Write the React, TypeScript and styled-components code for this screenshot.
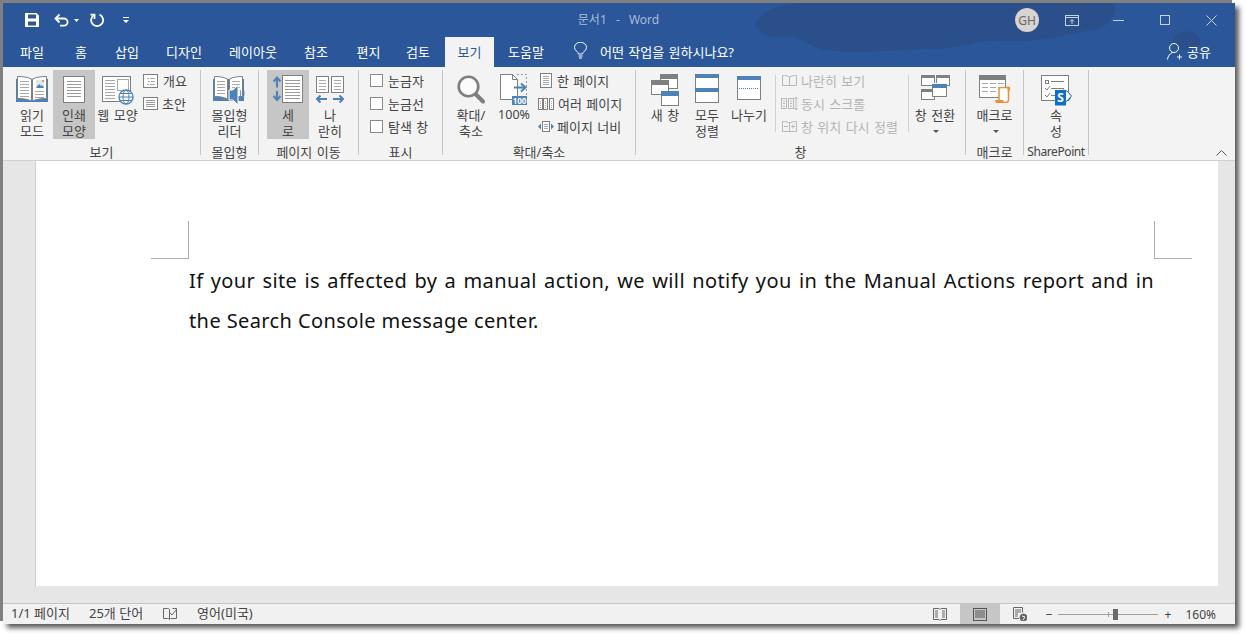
import React from "react";
import styled, { createGlobalStyle } from "styled-components";

const Global = createGlobalStyle`
  html, body { margin: 0; padding: 0; background: #fff; overflow: hidden; }
  body { font-family: "Noto Sans", "Noto Sans CJK KR", sans-serif; }
  svg { display: block; flex: none; }
`;

const Stage = styled.div`
  width: 1246px;
  height: 635px;
  padding: 3px 0 0 3px;
  box-sizing: border-box;
  background: #fff;
`;
const Win = styled.div`
  width: 1232px;
  height: 621px;
  display: flex;
  flex-direction: column;
  background: #e6e6e6;
  box-shadow: -3px -3px 0 #808080, 4px 4px 5px #5a5a5a;
`;
const Header = styled.header`
  position: relative;
  height: 64px;
  flex: none;
  background: #2b579a;
  color: #fff;
  font-size: 13px;
`;
const Clouds = styled.svg`
  position: absolute;
  left: 0;
  top: 0;
`;
const TitleRow = styled.div`
  position: relative;
  height: 34px;
  display: grid;
  grid-template-columns: 1fr auto 1fr;
  align-items: center;
`;
const Qat = styled.div`
  display: flex;
  align-items: center;
  padding-left: 22px;
`;
const Gap = styled.span<{ $w: number }>`
  width: ${(p) => p.$w}px;
  flex: none;
`;
const Title = styled.div`
  color: #a9bcd9;
  font-size: 12px;
  word-spacing: 6px;
  margin-right: 1px;
  padding-bottom: 2px;
`;
const WinControls = styled.div`
  display: flex;
  align-items: center;
  justify-content: flex-end;
  padding-right: 18px;
`;
const Avatar = styled.div`
  width: 24px;
  height: 24px;
  border-radius: 50%;
  background: #d8d4cf;
  color: #666;
  font-size: 12px;
  display: flex;
  align-items: center;
  justify-content: center;
  margin-right: 26px;
`;
const TabRow = styled.nav`
  position: relative;
  height: 30px;
  display: flex;
  align-items: stretch;
  padding-left: 5px;
`;
const Tab = styled.div<{ $w: number; $active?: boolean }>`
  width: ${(p) => p.$w}px;
  box-sizing: border-box;
  padding-bottom: 2px;
  display: flex;
  align-items: center;
  justify-content: center;
  background: ${(p) => (p.$active ? "#f3f3f3" : "transparent")};
  color: ${(p) => (p.$active ? "#2b579a" : "#fff")};
`;
const Tell = styled.div`
  display: flex;
  align-items: center;
  gap: 13px;
  margin-left: 16px;
  word-spacing: 1px;
  padding-bottom: 2px;
`;
const Share = styled.div`
  margin-left: auto;
  padding: 0 24px 2px 0;
  display: flex;
  align-items: center;
  gap: 5px;
`;
const Ribbon = styled.section`
  height: 94px;
  flex: none;
  box-sizing: border-box;
  padding-top: 3px;
  display: flex;
  align-items: flex-start;
  background: #f3f3f3;
  border-bottom: 1px solid #d0d0d0;
  color: #444;
  font-size: 13px;
  word-spacing: 1px;
`;
const Group = styled.div<{ $w: number }>`
  width: ${(p) => p.$w}px;
  height: 85px;
  box-sizing: border-box;
  flex: none;
  border-right: 1px solid #c6c6c6;
  display: flex;
  flex-direction: column;
`;
const GroupBody = styled.div<{ $pad?: number }>`
  height: 74px;
  display: flex;
  align-items: flex-start;
  padding-left: ${(p) => p.$pad ?? 0}px;
`;
const GroupLabel = styled.div<{ $latin?: boolean }>`
  height: 11px;
  line-height: 16px;
  text-align: center;
  white-space: nowrap;
  font-size: ${(p) => (p.$latin ? "12px" : "13px")};
  letter-spacing: ${(p) => (p.$latin ? "-0.4px" : "0")};
`;
const LargeBtn = styled.div<{ $w: number; $on?: boolean; $ml?: number }>`
  width: ${(p) => p.$w}px;
  height: 69px;
  flex: none;
  margin-left: ${(p) => p.$ml ?? 0}px;
  display: flex;
  flex-direction: column;
  align-items: center;
  background: ${(p) => (p.$on ? "#c6c6c6" : "transparent")};
`;
const IconSlot = styled.div<{ $top: number }>`
  height: 37px;
  box-sizing: border-box;
  padding-top: ${(p) => p.$top}px;
`;
const BtnText = styled.div<{ $latin?: boolean }>`
  line-height: 16px;
  text-align: center;
  white-space: nowrap;
  font-size: ${(p) => (p.$latin ? "12.5px" : "13px")};
`;
const Caret = styled.div`
  width: 0;
  height: 0;
  margin: 7px 0 0 2px;
  border-left: 3px solid transparent;
  border-right: 3px solid transparent;
  border-top: 3px solid #555;
`;
const SmallCol = styled.div<{ $ml?: number; $w?: number; $off?: boolean }>`
  display: flex;
  flex-direction: column;
  flex: none;
  margin-top: -1px;
  margin-left: ${(p) => p.$ml ?? 0}px;
  width: ${(p) => (p.$w ? `${p.$w}px` : "auto")};
  color: ${(p) => (p.$off ? "#b4b4b4" : "#444")};
`;
const SmallRow = styled.div<{ $gap?: number }>`
  height: 23px;
  display: flex;
  align-items: center;
  gap: ${(p) => p.$gap ?? 5}px;
  white-space: nowrap;
`;
const SmallIcon = styled.div<{ $w: number }>`
  width: ${(p) => p.$w}px;
  display: flex;
  justify-content: center;
  flex: none;
`;
const Check = styled.div`
  width: 11px;
  height: 11px;
  flex: none;
  background: #fff;
  border: 1px solid #8a8a8a;
`;
const VSep = styled.div<{ $ml: number }>`
  width: 1px;
  height: 57px;
  flex: none;
  margin: 5px 0 0 ${(p) => p.$ml}px;
  background: #d0d0d0;
`;
const Collapse = styled.div`
  margin-left: auto;
  margin-right: 8px;
  margin-top: 80px;
`;
const DocArea = styled.main`
  flex: 1;
  box-sizing: border-box;
  padding: 0 17px 17px 32px;
  display: flex;
  min-height: 0;
  background: #e6e6e6;
`;
const Page = styled.article`
  position: relative;
  flex: 1;
  box-sizing: border-box;
  border-left: 1px solid #cfcfcf;
  background: #fff;
  padding: 100px 64px 0 153px;
`;
const Crop = styled.div<{ $side: "l" | "r" }>`
  position: absolute;
  top: 60px;
  width: 38px;
  height: 38px;
  box-sizing: border-box;
  border-bottom: 1px solid #acacac;
  ${(p) =>
    p.$side === "l"
      ? "left: 115px; border-right: 1px solid #acacac;"
      : "right: 26px; border-left: 1px solid #acacac;"}
`;
const Para = styled.p`
  margin: 0;
  font-family: "Noto Sans", "Noto Sans CJK KR", sans-serif;
  font-size: 20px;
  line-height: 40px;
  letter-spacing: 0.4px;
  color: #111;
  text-align: justify;
`;
const Status = styled.footer`
  height: 21px;
  flex: none;
  box-sizing: border-box;
  border-top: 1px solid #c6c6c6;
  background: #f1f1f1;
  color: #444;
  font-size: 13px;
  display: flex;
  align-items: center;
  padding-left: 8px;
`;
const StatusItem = styled.div`
  margin-right: 19px;
  white-space: nowrap;
  padding-bottom: 3px;
`;
const StatusGlyph = styled.div`
  margin: 0 20px 0 1px;
`;
const ViewBtn = styled.div<{ $on?: boolean; $auto?: boolean }>`
  width: 40px;
  height: 20px;
  display: flex;
  align-items: center;
  justify-content: center;
  margin-left: ${(p) => (p.$auto ? "auto" : "0")};
  background: ${(p) => (p.$on ? "#c6c6c6" : "transparent")};
`;
const ZoomBar = styled.div`
  display: flex;
  align-items: center;
  gap: 5px;
  margin-left: 6px;
  font-size: 12px;
`;
const PlusSign = styled.span`
  margin-left: 2px;
`;
const Slider = styled.div`
  position: relative;
  width: 100px;
  height: 1px;
  background: #a0a0a0;
`;
const Tick = styled.div`
  position: absolute;
  left: 50px;
  top: -2px;
  width: 1px;
  height: 5px;
  background: #a0a0a0;
`;
const Knob = styled.div`
  position: absolute;
  left: 55px;
  top: -5px;
  width: 5px;
  height: 11px;
  background: #6a6a6a;
`;
const Percent = styled.div`
  margin-left: 14px;
  margin-right: 19px;
  font-size: 12px;
`;

const G = "#7f7f7f";
const L = "#a8a8a8";
const B = "#4d82b8";

const Lines = ({ x1, x2, ys, c = L }: { x1: number; x2: number; ys: number[]; c?: string }) => (
  <>
    {ys.map((y) => (
      <line key={y} x1={x1} x2={x2} y1={y + 0.5} y2={y + 0.5} stroke={c} />
    ))}
  </>
);

const SaveIcon = () => (
  <svg width="14" height="14" viewBox="0 0 14 14">
    <path fill="#fff" fillRule="evenodd" d="M0 0h11.5L14 2.5V14H0zM3 1.5v4h8v-4zM3 8.5v4h8v-4z" />
  </svg>
);
const UndoIcon = () => (
  <svg width="15" height="14" viewBox="0 0 15 14" fill="none" stroke="#fff" strokeWidth="1.8">
    <path d="M2 5.5h8a3.6 3.6 0 0 1 0 7.2H6" />
    <path d="M5.5 1.5 1.5 5.5l4 4" />
  </svg>
);
const RedoIcon = () => (
  <svg width="14" height="14" viewBox="0 0 14 14" fill="none" stroke="#fff" strokeWidth="1.8">
    <path d="M9.5 1.6a6 6 0 1 1-5.5.4" />
    <path d="M4.5 6V1.6H.5" />
  </svg>
);
const TinyCaret = ({ c = "#fff" }: { c?: string }) => (
  <svg width="5" height="3" viewBox="0 0 5 3">
    <path d="M0 0h5L2.5 3z" fill={c} />
  </svg>
);
const CustomizeIcon = () => (
  <svg width="6" height="6" viewBox="0 0 6 6">
    <path d="M0 0h6v1H0zM0 3h6L3 6z" fill="#fff" />
  </svg>
);
const DisplayIcon = () => (
  <svg width="14" height="11" viewBox="0 0 14 11" fill="none" stroke="#c6d3e6">
    <rect x=".5" y=".5" width="13" height="10" />
    <path d="M1 2.5h12M7 9V4.5M5 6.5l2-2 2 2" />
  </svg>
);
const MinIcon = () => (
  <svg width="11" height="1" viewBox="0 0 11 1">
    <rect width="11" height="1" fill="#c6d3e6" />
  </svg>
);
const MaxIcon = () => (
  <svg width="10" height="10" viewBox="0 0 10 10" fill="none" stroke="#c6d3e6">
    <rect x=".5" y=".5" width="9" height="9" />
  </svg>
);
const CloseIcon = () => (
  <svg width="11" height="11" viewBox="0 0 11 11" fill="none" stroke="#c6d3e6">
    <path d="M.5.5l10 10M10.5.5l-10 10" />
  </svg>
);
const BulbIcon = () => (
  <svg width="13" height="18" viewBox="0 0 13 18" fill="none" stroke="#fff">
    <path d="M4.5 12c0-2-4-3.400-4-6.500a6 5.300 0 0 1 12 0c0 3.100-4 4.500-4 6.500z" />
    <path d="M4.500 14h4M5 16h3" />
  </svg>
);
const ShareIcon = () => (
  <svg width="15" height="17" viewBox="0 0 15 17" fill="none" stroke="#fff">
    <ellipse cx="7" cy="5" rx="4.500" ry="4.500" />
    <path d="M.5 16.500c.3-3.500 2.500-6 5-7M10 14h5M12.500 11.500v5" />
  </svg>
);

const ReadIcon = () => (
  <svg width="32" height="27" viewBox="0 0 32 27">
    <rect x="0" y="3" width="32" height="23" fill={B} />
    <path d="M1.500.5c5 0 10 .5 14 2.500v22c-4-2-9-2.500-14-2.500z" fill="#fff" stroke={G} />
    <path d="M30.500.5c-5 0-10 .5-14 2.500v22c4-2 9-2.500 14-2.500z" fill="#fff" stroke={G} />
    <Lines x1={4} x2={13} ys={[5, 8, 11, 14, 17, 20]} />
    <Lines x1={19} x2={28} ys={[15, 18, 21]} />
    <rect x="20" y="4" width="8" height="8" fill="#dfe7f1" />
    <path d="M20 12l3-4 2 2 1-1 2 3z" fill={B} />
    <rect x="26" y="4" width="2" height="2" fill="#e8903a" />
  </svg>
);
const PrintIcon = () => (
  <svg width="22" height="27" viewBox="0 0 22 27">
    <rect x=".5" y=".5" width="21" height="26" fill="#fff" stroke={G} />
    <Lines x1={4} x2={18} ys={[5, 8, 11, 14, 17, 20]} c="#999" />
  </svg>
);
const WebIcon = () => (
  <svg width="32" height="29" viewBox="0 0 32 29">
    <rect x=".5" y=".5" width="28" height="25" fill="#fff" stroke={G} />
    <Lines x1={3} x2={13} ys={[4, 7, 10, 13, 16, 19, 22]} />
    <rect x="15.500" y="3.500" width="11" height="11" fill="#fff" stroke={L} />
    <circle cx="24" cy="21" r="7" fill="#fff" stroke={B} strokeWidth="1.300" />
    <ellipse cx="24" cy="21" rx="3" ry="7" fill="none" stroke={B} />
    <path d="M17 21h14M18.500 17.500h11M18.500 24.500h11" stroke={B} />
  </svg>
);
const OutlineIcon = () => (
  <svg width="15" height="14" viewBox="0 0 15 14">
    <rect x=".5" y=".5" width="14" height="13" fill="#fff" stroke={G} />
    <path d="M4 4.500h2M7 4.500h5M5 7.500h2M8 7.500h4M4 10.500h2M7 10.500h5" stroke={L} />
  </svg>
);
const DraftIcon = () => (
  <svg width="15" height="13" viewBox="0 0 15 13">
    <rect x=".5" y=".5" width="14" height="12" fill="#fff" stroke={G} />
    <Lines x1={3} x2={12} ys={[3, 5, 7, 9]} c="#999" />
  </svg>
);
const ImmersiveIcon = () => (
  <svg width="33" height="30" viewBox="0 0 33 30">
    <rect x="0" y="3" width="31" height="22" fill={B} />
    <path d="M1.500.5c5 0 9 .5 13 2.500v20c-4-2-8-2.500-13-2.500z" fill="#fff" stroke={G} />
    <path d="M29.500.5c-5 0-9 .5-13 2.500v20c4-2 8-2.500 13-2.500z" fill="#fff" stroke={G} />
    <Lines x1={4} x2={12} ys={[5, 8, 11, 14, 17]} />
    <Lines x1={19} x2={27} ys={[5, 8, 11]} />
    <path d="M16 14h4l5-5v20l-5-5h-4z" fill={B} stroke="#fff" />
    <path d="M27 14c1 2 1 5 0 7M29.500 12c2 3 2 8 0 11" fill="none" stroke={B} />
  </svg>
);
const VerticalIcon = () => (
  <svg width="30" height="28" viewBox="0 0 30 28">
    <rect x="9.500" y=".5" width="20" height="27" fill="#fff" stroke={G} />
    <Lines x1={12} x2={27} ys={[5, 8, 11, 14, 17, 20, 23]} c="#999" />
    <path d="M4 3.500v9M4 16v9" stroke={B} strokeWidth="2.200" fill="none" />
    <path d="M.5 6.500 4 2.500l3.500 4M.5 21 4 25l3.500-4" stroke={B} strokeWidth="2" fill="none" />
  </svg>
);
const SideIcon = () => (
  <svg width="28" height="28" viewBox="0 0 28 28">
    <rect x=".5" y=".5" width="12" height="16" fill="#fff" stroke={G} />
    <rect x="15.500" y=".5" width="12" height="16" fill="#fff" stroke={G} />
    <Lines x1={3} x2={10} ys={[4, 7, 10, 13]} />
    <Lines x1={18} x2={25} ys={[4, 7, 10, 13]} />
    <path d="M1 23h10M17 23h10M4.500 19.500 1 23l3.500 3.500M23.500 19.500 27 23l-3.500 3.500" stroke={B} strokeWidth="2" fill="none" />
  </svg>
);
const Magnifier = () => (
  <svg width="28" height="29" viewBox="0 0 28 29" fill="none">
    <circle cx="11.500" cy="11.500" r="9.800" stroke={G} strokeWidth="2.600" fill="#fbfbfb" />
    <path d="M19 19.500l7 7" stroke={G} strokeWidth="4" strokeLinecap="round" />
  </svg>
);
const ZoomHundred = () => (
  <svg width="28" height="32" viewBox="0 0 28 32">
    <path d="M.5.500h12l5 5v20H.5z" fill="#fff" stroke={G} />
    <path d="M12.500.500v5h5" fill="none" stroke={G} />
    <path d="M17 .5h9.500v22" fill="none" stroke="#999" strokeDasharray="2 2" />
    <path d="M14 13.500h11M21 9.500l4.500 4-4.500 4" fill="none" stroke={B} strokeWidth="2" />
    <rect x="12" y="22" width="15" height="9" fill={B} />
    <text x="19.500" y="29.500" textAnchor="middle" fontSize="8" fontWeight="700" fill="#fff" fontFamily="Noto Sans">100</text>
  </svg>
);
const OnePage = () => (
  <svg width="12" height="15" viewBox="0 0 12 15">
    <rect x=".5" y=".5" width="11" height="14" fill="#fff" stroke={G} />
    <Lines x1={3} x2={9} ys={[3, 5, 7, 9, 11]} />
  </svg>
);
const MultiPage = () => (
  <svg width="16" height="12" viewBox="0 0 16 12">
    <rect x=".5" y=".5" width="4" height="11" fill="#fff" stroke={G} />
    <rect x="5.500" y=".5" width="4" height="11" fill="#fff" stroke={G} />
    <rect x="11.500" y=".5" width="4" height="11" fill="#fff" stroke={G} />
    <Lines x1={2} x2={3} ys={[3, 5, 7, 9]} />
    <Lines x1={7} x2={8} ys={[3, 5, 7, 9]} />
    <Lines x1={13} x2={14} ys={[3, 5, 7, 9]} />
  </svg>
);
const PageWidth = () => (
  <svg width="16" height="11" viewBox="0 0 16 11">
    <path d="M3 2.500v6L0 5.500zM13 2.500v6l3-3z" fill={B} />
    <rect x="4.500" y=".5" width="7" height="10" fill="#fff" stroke={G} />
    <Lines x1={6} x2={10} ys={[3, 5, 7]} />
  </svg>
);
const Win3 = () => (
  <svg width="28" height="32" viewBox="0 0 28 32">
    <rect x="9.500" y=".5" width="17" height="14" fill="#fff" stroke={G} />
    <rect x="9" y="0" width="18" height="5" fill={G} />
    <rect x=".5" y="6.500" width="17" height="14" fill="#fff" stroke={G} />
    <rect x="0" y="6" width="18" height="5" fill={G} />
    <rect x="10.500" y="17.500" width="17" height="14" fill="#fff" stroke={G} />
    <rect x="10" y="17" width="18" height="5" fill={B} />
  </svg>
);
const ArrangeAll = () => (
  <svg width="24" height="29" viewBox="0 0 24 29">
    <rect x=".5" y=".5" width="23" height="28" fill="#fff" stroke={G} />
    <rect x="0" y="0" width="24" height="4" fill={B} />
    <rect x="0" y="14" width="24" height="4" fill={B} />
  </svg>
);
const SplitIcon = () => (
  <svg width="24" height="24" viewBox="0 0 24 24">
    <rect x=".5" y=".5" width="23" height="23" fill="#fff" stroke={G} />
    <rect x="0" y="0" width="24" height="4" fill={B} />
    <path d="M2 12.500h20" stroke={B} strokeDasharray="1 1" />
  </svg>
);
const SwitchIcon = () => (
  <svg width="29" height="25" viewBox="0 0 29 25">
    <rect x=".5" y=".5" width="13" height="10" fill="#fff" stroke={G} />
    <rect x="0" y="0" width="14" height="3" fill={G} />
    <rect x="15.500" y=".5" width="13" height="10" fill="#fff" stroke={G} />
    <rect x="15" y="0" width="14" height="3" fill={G} />
    <rect x=".5" y="14.500" width="13" height="10" fill="#fff" stroke={G} />
    <rect x="0" y="14" width="14" height="3" fill={G} />
    <rect x="11" y="8" width="15" height="14" fill="#f3f3f3" />
    <rect x="11.500" y="9.500" width="14" height="12" fill="#fff" stroke={G} />
    <rect x="11" y="9" width="15" height="4" fill={B} />
  </svg>
);
const MacroIcon = () => (
  <svg width="31" height="28" viewBox="0 0 31 28">
    <rect x=".5" y=".5" width="26" height="22" fill="#fff" stroke={G} />
    <rect x="0" y="0" width="27" height="5" fill={G} />
    <path d="M3 8.500h6M11 8.500h6M19 8.500h6M3 12.500h6M11 12.500h6M19 12.500h6M3 16.500h6M11 16.500h6" stroke={L} />
    <path d="M20 14c0-1 1-1.500 2-1.500h9c-1 .5-1.500 1-1.500 2v10c0 2-1 3-3 3h-9c1.500-.5 2.500-1.500 2.500-3z" fill="#fff" stroke="#e8903a" strokeWidth="1.500" />
    <path d="M16 25h8.500v3H17z" fill="#e8903a" />
    <path d="M28 12.500h3v3h-2z" fill="#e8903a" />
  </svg>
);
const SharePointIcon = () => (
  <svg width="31" height="31" viewBox="0 0 31 31">
    <rect x=".5" y=".5" width="27" height="25" fill="#fff" stroke={G} />
    <rect x="4.500" y="5.500" width="3" height="3" fill="none" stroke={G} />
    <path d="M10 6.500h13M10 13.500h13M10 20.500h5" stroke={G} />
    <path d="M4 13l2 2 3-4M4 20l2 2 3-4" fill="none" stroke={G} />
    <circle cx="25.500" cy="21.500" r="3.500" fill="#fff" stroke="#0f6fc6" strokeWidth="2" />
    <path d="M22 15l4 1 4.500 5-4.500 5-4 1z" fill="#fff" stroke="#0f6fc6" />
    <rect x="14" y="15" width="11" height="15.500" fill="#0f6fc6" />
    <text x="19.500" y="27" textAnchor="middle" fontSize="12" fontWeight="700" fill="#fff" fontFamily="Noto Sans">S</text>
  </svg>
);
const OFF = "#b8b8b8";
const SideOff = () => (
  <svg width="15" height="11" viewBox="0 0 15 11" fill="none" stroke={OFF}>
    <path d="M.5.500c3 0 5 .5 7 1.500 2-1 4-1.500 7-1.500v10h-14zM7.500 2v8.500" />
  </svg>
);
const ScrollOff = () => (
  <svg width="17" height="15" viewBox="0 0 17 15" fill="none" stroke={OFF}>
    <rect x=".5" y="2.500" width="5" height="10" />
    <rect x="7.500" y="2.500" width="5" height="10" />
    <path d="M2 5h2M2 7.500h2M2 10h2M9 5h2M9 7.500h2M9 10h2M15 1v13M13.500 3 15 1l1.500 2M13.500 12l1.500 2 1.500-2" />
  </svg>
);
const ResetOff = () => (
  <svg width="15" height="11" viewBox="0 0 15 11" fill="none" stroke={OFF}>
    <path d="M.5.500c3 0 5 .5 7 1.500 2-1 4-1.500 7-1.500v10h-14zM7.500 2v8.500M2 5.500h4M9 5.500h4M11 3.500v4" />
  </svg>
);
const Chevron = () => (
  <svg width="11" height="6" viewBox="0 0 11 6" fill="none" stroke="#555">
    <path d="M.5 5.500l5-5 5 5" />
  </svg>
);
const ProofIcon = () => (
  <svg width="14" height="12" viewBox="0 0 14 12" fill="none" stroke="#666">
    <path d="M.5.500h4c1 0 2 .5 2 1v10c0-.5-1-1-2-1h-4zM9.500.500h4v10h-6M7 5l2 2 4-5" />
  </svg>
);
const StatRead = () => (
  <svg width="14" height="13" viewBox="0 0 14 13" fill="none" stroke="#666">
    <path d="M.5.500h5.500l1 1 1-1h5.500v11h-5.500l-1 1-1-1H.5zM2 3h3M2 5h3M2 7h3M2 9h3M9 3h3M9 5h3M9 7h3M9 9h3" />
  </svg>
);
const StatPrint = () => (
  <svg width="14" height="13" viewBox="0 0 14 13" fill="none" stroke="#555">
    <rect x=".5" y=".5" width="13" height="12" />
    <path d="M2 3h10M2 5h10M2 7h10M2 9h10" />
  </svg>
);
const StatWeb = () => (
  <svg width="14" height="14" viewBox="0 0 14 14" fill="none" stroke="#666">
    <path d="M6 11.500H.5V.500h9v5M2 3h6M2 5h6M2 7h3M2 9h3" />
    <circle cx="10.500" cy="10.500" r="3.500" fill="#666" />
    <path d="M9 9l3 1-2 3" stroke="#f1f1f1" />
  </svg>
);

const Big = ({ w, top, on, ml, text, icon, caret, latin }: { w: number; top: number; on?: boolean; ml?: number; text: React.ReactNode; icon: React.ReactNode; caret?: boolean; latin?: boolean }) => (
  <LargeBtn $w={w} $on={on} $ml={ml}>
    <IconSlot $top={top}>{icon}</IconSlot>
    <BtnText $latin={latin}>{text}</BtnText>
    {caret && <Caret />}
  </LargeBtn>
);

export default function App() {
  return (
    <Stage>
      <Global />
      <Win>
        <Header>
          <Clouds width="1232" height="64" viewBox="0 0 1232 64">
            <path
              fill="#2a4f8b"
              d="M752 22C755 8 775 2 800 0H1110C1115 6 1110 20 1095 26C1070 30 1040 40 1000 38C975 36 960 46 930 46C890 48 850 50 830 48C810 46 800 36 790 34C770 36 755 32 752 22ZM1170 37c2-10 22-12 26-2 4 8-6 14-14 12-8 0-14-4-12-10z"
            />
          </Clouds>
          <TitleRow>
            <Qat>
              <SaveIcon />
              <Gap $w={15} />
              <UndoIcon />
              <Gap $w={5} />
              <TinyCaret />
              <Gap $w={11} />
              <RedoIcon />
              <Gap $w={19} />
              <CustomizeIcon />
            </Qat>
            <Title>문서1 - Word</Title>
            <WinControls>
              <Avatar>GH</Avatar>
              <DisplayIcon />
              <Gap $w={34} />
              <MinIcon />
              <Gap $w={36} />
              <MaxIcon />
              <Gap $w={36} />
              <CloseIcon />
            </WinControls>
          </TitleRow>
          <TabRow>
            <Tab $w={48}>파일</Tab>
            <Tab $w={50}>홈</Tab>
            <Tab $w={42}>삽입</Tab>
            <Tab $w={72}>디자인</Tab>
            <Tab $w={66}>레이아웃</Tab>
            <Tab $w={60}>참조</Tab>
            <Tab $w={45}>편지</Tab>
            <Tab $w={54}>검토</Tab>
            <Tab $w={49} $active>보기</Tab>
            <Tab $w={64}>도움말</Tab>
            <Tell>
              <BulbIcon />
              <span>어떤 작업을 원하시나요?</span>
            </Tell>
            <Share>
              <ShareIcon />
              <span>공유</span>
            </Share>
          </TabRow>
        </Header>

        <Ribbon>
          <Group $w={198}>
            <GroupBody $pad={8}>
              <Big w={42} top={6} icon={<ReadIcon />} text={<>읽기<br />모드</>} />
              <Big w={42} top={6} on icon={<PrintIcon />} text={<>인쇄<br />모양</>} />
              <Big w={45} top={6} icon={<WebIcon />} text="웹 모양" />
              <SmallCol $ml={3}>
                <SmallRow><SmallIcon $w={15}><OutlineIcon /></SmallIcon>개요</SmallRow>
                <SmallRow $gap={4}><SmallIcon $w={15}><DraftIcon /></SmallIcon>초안</SmallRow>
              </SmallCol>
            </GroupBody>
            <GroupLabel>보기</GroupLabel>
          </Group>
          <Group $w={58}>
            <GroupBody>
              <Big w={57} top={6} icon={<ImmersiveIcon />} text={<>몰입형<br />리더</>} />
            </GroupBody>
            <GroupLabel>몰입형</GroupLabel>
          </Group>
          <Group $w={100}>
            <GroupBody $pad={8}>
              <Big w={42} top={5} on icon={<VerticalIcon />} text={<>세<br />로</>} />
              <Big w={42} top={6} icon={<SideIcon />} text={<>나<br />란히</>} />
            </GroupBody>
            <GroupLabel>페이지 이동</GroupLabel>
          </Group>
          <Group $w={84}>
            <GroupBody $pad={11}>
              <SmallCol>
                <SmallRow><Check />눈금자</SmallRow>
                <SmallRow><Check />눈금선</SmallRow>
                <SmallRow><Check />탐색 창</SmallRow>
              </SmallCol>
            </GroupBody>
            <GroupLabel>표시</GroupLabel>
          </Group>
          <Group $w={193}>
            <GroupBody>
              <Big w={56} top={5} icon={<Magnifier />} text={<>확대/<br />축소</>} />
              <Big w={30} top={4} latin icon={<ZoomHundred />} text="100%" />
              <SmallCol $ml={9}>
                <SmallRow $gap={3}><SmallIcon $w={16}><OnePage /></SmallIcon>한 페이지</SmallRow>
                <SmallRow $gap={4}><SmallIcon $w={16}><MultiPage /></SmallIcon>여러 페이지</SmallRow>
                <SmallRow $gap={3}><SmallIcon $w={16}><PageWidth /></SmallIcon>페이지 너비</SmallRow>
              </SmallCol>
            </GroupBody>
            <GroupLabel>확대/축소</GroupLabel>
          </Group>
          <Group $w={330}>
            <GroupBody $pad={8}>
              <Big w={42} top={4} icon={<Win3 />} text="새 창" />
              <Big w={42} top={4} icon={<ArrangeAll />} text={<>모두<br />정렬</>} />
              <Big w={42} top={6} icon={<SplitIcon />} text="나누기" />
              <VSep $ml={5} />
              <SmallCol $ml={6} $w={120} $off>
                <SmallRow $gap={4}><SmallIcon $w={15}><SideOff /></SmallIcon>나란히 보기</SmallRow>
                <SmallRow $gap={4}><SmallIcon $w={15}><ScrollOff /></SmallIcon>동시 스크롤</SmallRow>
                <SmallRow $gap={4}><SmallIcon $w={15}><ResetOff /></SmallIcon>창 위치 다시 정렬</SmallRow>
              </SmallCol>
              <VSep $ml={6} />
              <Big w={48} ml={2} top={5} icon={<SwitchIcon />} text="창 전환" caret />
            </GroupBody>
            <GroupLabel>창</GroupLabel>
          </Group>
          <Group $w={58}>
            <GroupBody>
              <Big w={57} top={5} icon={<MacroIcon />} text="매크로" caret />
            </GroupBody>
            <GroupLabel>매크로</GroupLabel>
          </Group>
          <Group $w={65}>
            <GroupBody>
              <Big w={64} top={5} icon={<SharePointIcon />} text={<>속<br />성</>} />
            </GroupBody>
            <GroupLabel $latin>SharePoint</GroupLabel>
          </Group>
          <Collapse><Chevron /></Collapse>
        </Ribbon>

        <DocArea>
          <Page>
            <Crop $side="l" />
            <Crop $side="r" />
            <Para>
              If your site is affected by a manual action, we will notify you in the Manual Actions report and in the Search Console message center.
            </Para>
          </Page>
        </DocArea>

        <Status>
          <StatusItem>1/1 페이지</StatusItem>
          <StatusItem>25개 단어</StatusItem>
          <StatusGlyph><ProofIcon /></StatusGlyph>
          <StatusItem>영어(미국)</StatusItem>
          <ViewBtn $auto><StatRead /></ViewBtn>
          <ViewBtn $on><StatPrint /></ViewBtn>
          <ViewBtn><StatWeb /></ViewBtn>
          <ZoomBar>
            <span>−</span>
            <Slider>
              <Tick />
              <Knob />
            </Slider>
            <PlusSign>+</PlusSign>
          </ZoomBar>
          <Percent>160%</Percent>
        </Status>
      </Win>
    </Stage>
  );
}
